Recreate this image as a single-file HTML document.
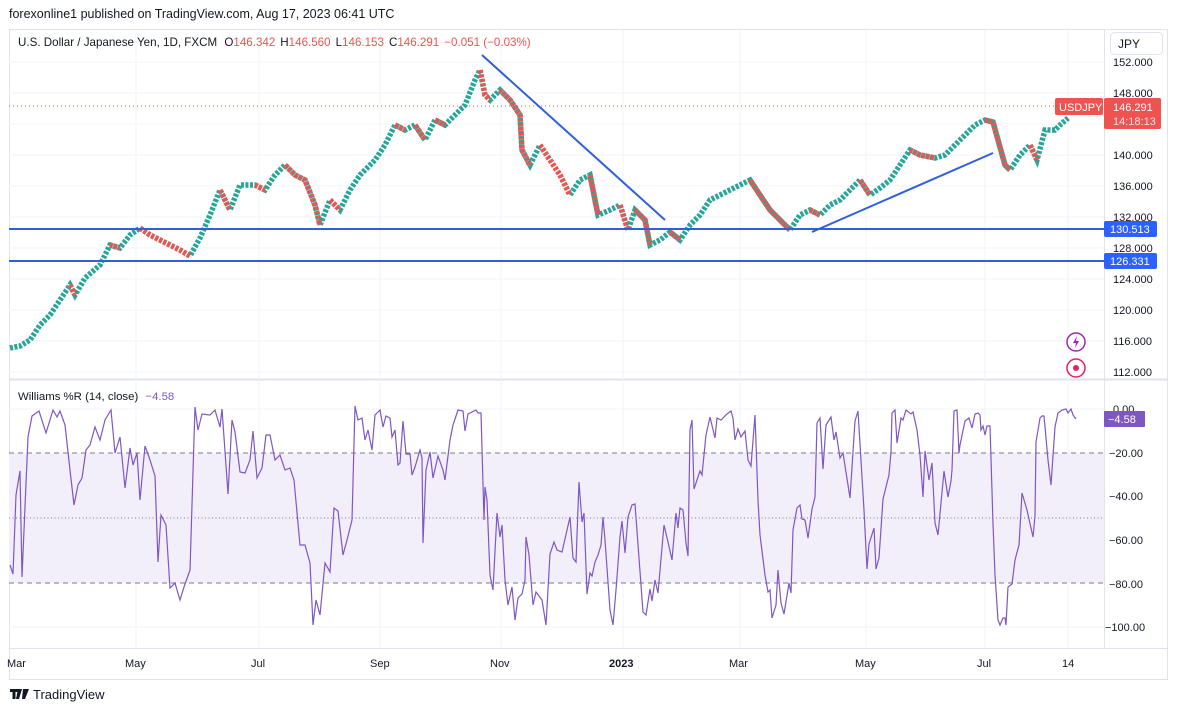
<!DOCTYPE html>
<html><head><meta charset="utf-8"><style>
body{margin:0;width:1177px;height:713px;background:#fff;font-family:"Liberation Sans",sans-serif;overflow:hidden;position:relative}
.t{position:absolute;white-space:nowrap}
</style></head><body>
<div class="t" style="left:9px;top:7px;font-size:12.5px;color:#131722">forexonline1 published on TradingView.com, Aug 17, 2023 06:41 UTC</div>
<svg width="1177" height="713" style="position:absolute;left:0;top:0" font-family="Liberation Sans, sans-serif">
<rect x="9.5" y="29.5" width="1158" height="650" fill="none" stroke="#e0e3eb"/>
<line x1="1104.5" y1="30" x2="1104.5" y2="648" stroke="#e0e3eb"/>
<line x1="9" y1="379.5" x2="1167" y2="379.5" stroke="#e0e3eb" stroke-width="2"/>
<line x1="9" y1="648.5" x2="1167" y2="648.5" stroke="#e0e3eb"/>
<g stroke="#f0f3fa">
<line x1="136" y1="30" x2="136" y2="648"/><line x1="259" y1="30" x2="259" y2="648"/><line x1="380" y1="30" x2="380" y2="648"/><line x1="501" y1="30" x2="501" y2="648"/><line x1="623" y1="30" x2="623" y2="648"/><line x1="740" y1="30" x2="740" y2="648"/><line x1="866" y1="30" x2="866" y2="648"/><line x1="985" y1="30" x2="985" y2="648"/><line x1="1068" y1="30" x2="1068" y2="648"/>
<line x1="9" y1="62" x2="1104" y2="62"/><line x1="9" y1="93" x2="1104" y2="93"/><line x1="9" y1="124" x2="1104" y2="124"/><line x1="9" y1="155" x2="1104" y2="155"/><line x1="9" y1="186" x2="1104" y2="186"/><line x1="9" y1="217" x2="1104" y2="217"/><line x1="9" y1="248" x2="1104" y2="248"/><line x1="9" y1="279" x2="1104" y2="279"/><line x1="9" y1="310" x2="1104" y2="310"/><line x1="9" y1="341" x2="1104" y2="341"/><line x1="9" y1="372" x2="1104" y2="372"/>
<line x1="9" y1="409" x2="1104" y2="409"/><line x1="9" y1="496" x2="1104" y2="496"/><line x1="9" y1="540" x2="1104" y2="540"/><line x1="9" y1="627" x2="1104" y2="627"/>
</g>
<line x1="9" y1="106" x2="1055" y2="106" stroke="#ef5350" stroke-dasharray="1 3"/>
<polyline fill="none" stroke="#26a69a" stroke-width="5.5" stroke-dasharray="3 1.5" points="10,348 20,346 30,340 40,325 50,315 60,300 70,285 75,295 85,278 100,265 110,245 120,248 130,235 140,228 150,235 160,240 170,245 180,250 190,256 200,238 210,215 220,190 230,210 240,185 255,185 265,190 275,175 285,165 295,175 305,180 315,205 320,225 330,200 340,210 350,190 360,175 375,160 385,145 395,125 405,130 415,125 425,140 435,120 445,125 455,115 465,105 475,80 480,70 485,95 490,100 495,95 500,90 510,100 520,115 522,150 530,165 540,145 550,160 560,175 570,195 580,180 590,175 598,215 610,210 620,205 628,230 635,210 645,220 650,245 660,240 670,232 680,240 690,225 700,215 710,200 720,195 730,190 740,185 750,180 760,195 770,210 780,220 790,230 800,215 810,210 820,215 830,205 840,200 850,190 860,180 870,195 880,188 890,180 900,165 910,150 920,155 935,158 945,155 955,145 965,135 975,125 985,120 993,122 998,140 1005,165 1010,170 1020,155 1030,145 1037,160 1045,130 1055,130 1060,125 1068,118"/>
<path fill="none" stroke="#ef5350" stroke-width="5.5" stroke-dasharray="3 1.5" d="M70 285L75 295 M110 245L120 248 M140 228L150 235L160 240L170 245L180 250L190 256 M220 190L230 210 M255 185L265 190 M285 165L295 175L305 180L315 205L320 225 M330 200L340 210 M395 125L405 130 M415 125L425 140 M435 120L445 125 M480 70L485 95L490 100 M500 90L510 100L520 115L522 150L530 165 M540 145L550 160L560 175L570 195 M590 175L598 215 M620 205L628 230 M635 210L645 220L650 245 M670 232L680 240 M750 180L760 195L770 210L780 220L790 230 M810 210L820 215 M860 180L870 195 M910 150L920 155L935 158 M985 120L993 122L998 140L1005 165L1010 170 M1030 145L1037 160"/>
<g stroke="#2e5fdc" stroke-width="2"><line x1="9" y1="229" x2="1104" y2="229"/><line x1="9" y1="261" x2="1104" y2="261"/><line x1="482" y1="55" x2="665" y2="220"/><line x1="812" y1="232" x2="993" y2="153"/></g>
<rect x="9" y="453" width="1095" height="130" fill="#f3effa"/>
<g stroke="#787b86"><line x1="9" y1="453" x2="1104" y2="453" stroke-dasharray="5 4"/><line x1="9" y1="583" x2="1104" y2="583" stroke-dasharray="5 4"/><line x1="9" y1="518" x2="1104" y2="518" stroke-dasharray="1 2.5"/></g>
<polyline fill="none" stroke="#7e57c2" stroke-width="1.2" points="10,565 13,574 16,495 20,471 22,577 28,437 32,416 39,411 46,433 53,410 57,417 60,411 65,425 70,470 74,505 78,485 82,478 86,450 90,445 95,427 100,440 105,420 111,410 115,453 120,437 125,488 130,448 133,465 137,453 140,500 145,446 150,460 155,476 158,562 161,515 166,525 170,588 175,583 180,600 184,587 190,570 195,407 198,430 202,414 210,415 215,410 220,427 222,409 228,494 232,420 235,432 240,472 245,473 250,460 253,431 257,478 262,468 266,435 270,435 275,460 280,455 285,470 290,468 294,480 300,545 305,545 310,563 313,625 316,600 320,615 325,563 330,572 334,508 338,511 343,555 347,540 352,520 355,406 358,420 362,418 365,440 368,430 372,450 375,415 380,410 383,427 386,416 390,418 392,437 395,430 398,465 400,463 403,421 406,454 410,454 412,475 415,467 420,450 422,458 423,543 426,470 430,452 433,478 438,456 443,470 445,480 450,440 453,425 458,410 463,411 465,431 468,414 472,412 476,410 478,413 481,413 484,520 485,487 487,500 490,575 493,590 497,513 500,537 502,525 505,580 508,605 512,587 515,620 518,598 522,594 525,580 526,537 529,555 533,605 536,592 542,600 546,625 550,554 554,542 557,550 562,552 570,517 573,558 576,562 579,482 582,522 584,513 587,594 590,573 592,576 595,562 598,555 601,545 603,517 605,540 610,610 613,625 616,590 620,537 622,521 625,553 628,517 632,505 635,504 643,612 646,615 650,589 652,601 655,580 658,593 664,525 668,542 672,560 676,513 678,528 680,508 683,510 686,543 688,556 690,430 692,420 694,489 700,471 702,475 706,435 710,417 715,438 717,418 721,420 727,414 731,411 733,418 735,440 738,429 741,437 745,431 748,460 751,466 755,415 758,500 760,535 765,575 768,592 770,590 772,618 776,605 778,570 781,603 784,614 789,583 791,593 793,530 797,508 800,505 802,519 805,520 808,538 812,509 815,497 817,423 820,418 823,469 826,425 831,417 834,440 836,432 840,458 843,453 848,485 850,498 855,421 858,411 864,510 867,569 869,544 874,528 876,569 879,558 883,499 889,475 891,452 892,413 895,410 897,443 901,418 903,420 906,410 911,414 913,412 917,430 920,455 923,497 925,451 929,480 932,463 935,523 938,535 944,471 948,497 951,481 952,470 954,411 957,410 959,453 960,445 965,421 969,418 972,428 975,414 978,413 980,415 981,430 983,426 985,435 987,426 990,426 993,524 995,575 998,620 1000,625 1003,618 1005,618 1006,625 1008,587 1012,584 1015,560 1019,545 1022,493 1027,510 1033,537 1035,516 1036,442 1040,418 1042,416 1044,416 1048,460 1051,485 1055,427 1058,413 1062,410 1066,409 1068,413 1071,409 1073,415 1076,419"/>
<g font-size="11" fill="#131722">
<text x="1113" y="66">152.000</text><text x="1113" y="97">148.000</text><text x="1113" y="159">140.000</text><text x="1113" y="190">136.000</text><text x="1113" y="221">132.000</text><text x="1113" y="252">128.000</text><text x="1113" y="283">124.000</text><text x="1113" y="314">120.000</text><text x="1113" y="345">116.000</text><text x="1113" y="376">112.000</text>
<text x="1113" y="413">0.00</text><text x="1109" y="457">−20.00</text><text x="1109" y="500">−40.00</text><text x="1109" y="544">−60.00</text><text x="1109" y="588">−80.00</text><text x="1105" y="631">−100.00</text>
<text x="7" y="667">Mar</text><text x="125" y="667">May</text><text x="251" y="667">Jul</text><text x="370" y="667">Sep</text><text x="490" y="667">Nov</text><text x="609" y="667" font-weight="bold">2023</text><text x="729" y="667">Mar</text><text x="855" y="667">May</text><text x="977" y="667">Jul</text><text x="1062" y="667">14</text>
</g>
<rect x="1055" y="98" width="48" height="17" rx="2" fill="#ef5350"/><text x="1059" y="111" font-size="11" fill="#fff">USDJPY</text>
<rect x="1104" y="98" width="57" height="31" rx="2" fill="#ef5350"/><text x="1113" y="111" font-size="11" fill="#fff">146.291</text><text x="1113" y="125" font-size="11" fill="#fde">14:18:13</text>
<rect x="1104" y="221" width="53" height="16" rx="2" fill="#2962ff"/><text x="1110" y="233" font-size="11" fill="#fff">130.513</text>
<rect x="1104" y="253" width="53" height="16" rx="2" fill="#2962ff"/><text x="1110" y="265" font-size="11" fill="#fff">126.331</text>
<rect x="1104" y="411" width="41" height="16" rx="1" fill="#7e57c2"/><text x="1108" y="423" font-size="11" fill="#fff">−4.58</text>
<rect x="1110.5" y="32.5" width="52" height="22" rx="4" fill="#fff" stroke="#e0e3eb"/><text x="1118" y="48" font-size="12" fill="#131722">JPY</text>
<circle cx="1076" cy="342" r="9" fill="#fff" stroke="#9c27b0" stroke-width="1.5"/><path d="M1077 336l-4 7h3l-1 5 4-7h-3z" fill="#9c27b0"/>
<circle cx="1076" cy="368" r="9" fill="#fff" stroke="#e91e63" stroke-width="1.5"/><circle cx="1076" cy="368" r="3" fill="#e91e63"/>
<text x="18" y="46" font-size="11.6" fill="#131722">U.S. Dollar / Japanese Yen, 1D, FXCM <tspan dx="4">O</tspan><tspan fill="#ef5350">146.342</tspan><tspan dx="5">H</tspan><tspan fill="#ef5350">146.560</tspan><tspan dx="5">L</tspan><tspan fill="#ef5350">146.153</tspan><tspan dx="5">C</tspan><tspan fill="#ef5350">146.291</tspan><tspan dx="5" fill="#ef5350">−0.051 (−0.03%)</tspan></text>
<text x="18" y="400" font-size="11.4" fill="#131722">Williams %R (14, close) <tspan dx="4" fill="#7e57c2">−4.58</tspan></text>
<path d="M10 689h8v3h-2.5v7h-3v-7h-2.5z M18 689h4l-3 10h-3z M23 689h6l-4 10h-3z" fill="#131722"/>
<text x="33" y="699" font-size="13" fill="#131722">TradingView</text>
</svg>
</body></html>
